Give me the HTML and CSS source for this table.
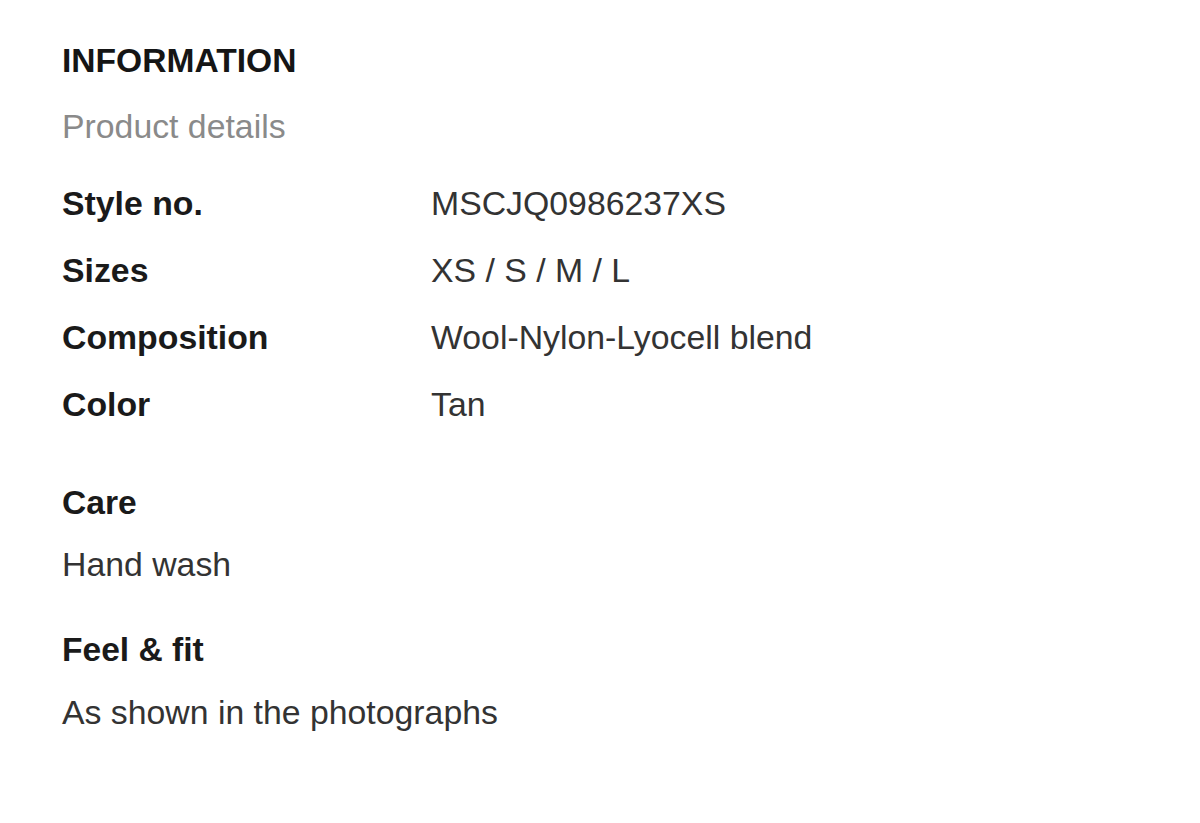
FILE: index.html
```html
<!DOCTYPE html>
<html lang="en">
<head>
<meta charset="utf-8">
<title>Information</title>
<link rel="stylesheet" href="styles.css">
</head>
<body>
<main class="panel">
  <h2 class="title">INFORMATION</h2>
  <p class="subtitle">Product details</p>
  <dl class="specs">
    <dt>Style no.</dt><dd>MSCJQ0986237XS</dd>
    <dt>Sizes</dt><dd>XS / S / M / L</dd>
    <dt>Composition</dt><dd>Wool-Nylon-Lyocell blend</dd>
    <dt>Color</dt><dd>Tan</dd>
  </dl>
  <section class="block care">
    <h3 class="block-title">Care</h3>
    <p class="block-text care-text">Hand wash</p>
  </section>
  <section class="block fit">
    <h3 class="block-title">Feel &amp; fit</h3>
    <p class="block-text fit-text">As shown in the photographs</p>
  </section>
</main>
</body>
</html>
```
FILE: styles.css
```css
html, body {
  margin: 0;
  padding: 0;
  background: #ffffff;
}
body {
  font-family: "Liberation Sans", Arial, sans-serif;
  font-size: 33.8px;
  line-height: 40px;
  color: #333333;
}
.panel {
  padding: 41px 0 0 62px;
}
.title {
  margin: 0;
  font-size: 33.6px;
  font-weight: 700;
  color: #151515;
  line-height: 40px;
}
.subtitle {
  margin: 25px 0 0;
  color: #8a8a8a;
}
.specs {
  margin: 37px 0 0;
  display: grid;
  grid-template-columns: 369px auto;
  row-gap: 27px;
}
.specs dt {
  font-weight: 700;
  color: #1a1a1a;
}
.specs dd {
  margin: 0;
  color: #333333;
}
.block-title {
  margin: 0;
  font-size: 33.6px;
  font-weight: 700;
  color: #1a1a1a;
  line-height: 40px;
}
.block-text {
  margin: 20px 0 0;
  color: #333333;
}
.care {
  margin-top: 59px;
}
.care-text {
  margin-top: 21px;
}
.fit {
  margin-top: 46px;
}
.fit-text {
  margin-top: 22px;
}
```
